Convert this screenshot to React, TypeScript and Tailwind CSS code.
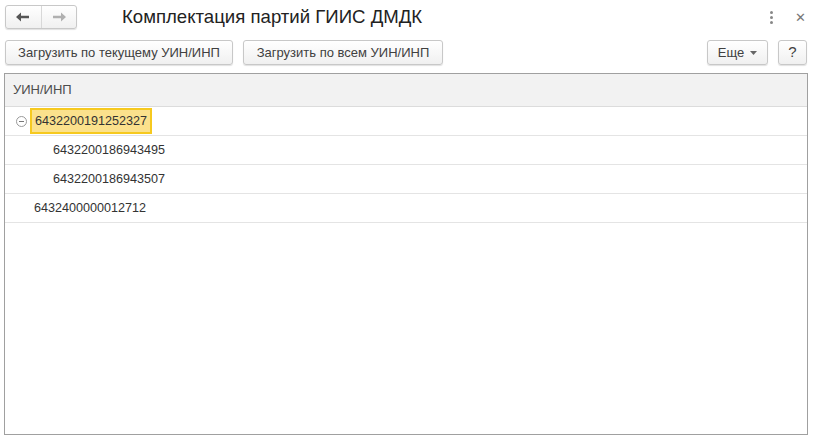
import React from 'react';

const btn =
  'h-[25px] flex items-center justify-center rounded-[3px] border border-[#c8c8c8] bg-gradient-to-b from-white to-[#f0f0f0] shadow-[0_1px_1px_rgba(0,0,0,0.12)] text-[13px] text-[#404040]';

function Arrow({ dir, color }: { dir: 'left' | 'right'; color: string }) {
  return (
    <svg width="14" height="10" viewBox="0 0 14 10">
      {dir === 'left' ? (
        <path d="M0 5 L5 0.5 L5 3.7 L13 3.7 L13 6.3 L5 6.3 L5 9.5 Z" fill={color} />
      ) : (
        <path d="M14 5 L9 0.5 L9 3.7 L1 3.7 L1 6.3 L9 6.3 L9 9.5 Z" fill={color} />
      )}
    </svg>
  );
}

const rows = [
  { id: '6432200191252327', level: 0, expanded: true, selected: true },
  { id: '6432200186943495', level: 1 },
  { id: '6432200186943507', level: 1 },
  { id: '6432400000012712', level: 0 },
];

export default function App() {
  return (
    <div className="w-[816px] h-[442px] bg-white overflow-hidden text-[#333] font-['Liberation_Sans',Arial,sans-serif]">
      {/* Title bar */}
      <div className="flex items-center h-[34px] pl-[5px] pr-[10px]">
        <div className="flex h-[24px] w-[72px] rounded-[3px] border border-[#c8c8c8] bg-gradient-to-b from-white to-[#f0f0f0] shadow-[0_1px_1px_rgba(0,0,0,0.12)]">
          <div className="flex-1 flex items-center justify-center border-r border-[#d8d8d8]">
            <Arrow dir="left" color="#555" />
          </div>
          <div className="flex-1 flex items-center justify-center">
            <Arrow dir="right" color="#b0b0b0" />
          </div>
        </div>
        <div className="ml-[45px] text-[18.6px] text-[#222] leading-none">Комплектация партий ГИИС ДМДК</div>
        <div className="ml-auto flex items-center gap-[22px]">
          <div className="flex flex-col gap-[2px]">
            <span className="w-[3px] h-[3px] rounded-full bg-[#888]" />
            <span className="w-[3px] h-[3px] rounded-full bg-[#888]" />
            <span className="w-[3px] h-[3px] rounded-full bg-[#888]" />
          </div>
          <span className="text-[13px] text-[#777] leading-none">✕</span>
        </div>
      </div>

      {/* Toolbar */}
      <div className="flex items-center mt-[6px] pl-[5px] pr-[9px] h-[25px]">
        <button className={`${btn} w-[228px]`}>Загрузить по текущему УИН/ИНП</button>
        <button className={`${btn} w-[200px] ml-[10px]`}>Загрузить по всем УИН/ИНП</button>
        <button className={`${btn} w-[61px] ml-auto gap-[6px]`}>
          <span>Еще</span>
          <svg width="7" height="4" viewBox="0 0 7 4">
            <path d="M0 0 L7 0 L3.5 4 Z" fill="#666" />
          </svg>
        </button>
        <button className={`${btn} w-[29px] ml-[10px] text-[15px]`}>?</button>
      </div>

      {/* Table */}
      <div className="mx-[4px] mt-[8px] h-[362px] w-[804px] border border-[#a0a0a0] flex flex-col">
        <div className="h-[33px] flex items-center pl-[8px] bg-[#f2f2f2] border-b border-[#dcdcdc] text-[13px] text-[#4d4d4d]">
          УИН/ИНП
        </div>
        {rows.map((r) => (
          <div key={r.id} className="h-[29px] flex items-center border-b border-[#e4e4e4] text-[12.6px] text-[#333]">
            {r.level === 0 && r.expanded ? (
              <>
                <span className="ml-[11px] w-[11px] h-[11px] rounded-full border border-[#9a9a9a] flex items-center justify-center">
                  <span className="w-[5px] h-[1px] bg-[#777]" />
                </span>
                <div
                  className={`ml-[3px] h-[26px] px-[3px] flex items-center ${
                    r.selected ? 'bg-[#fbe18c] border-2 border-[#f6c91f]' : ''
                  }`}
                >
                  {r.id}
                </div>
              </>
            ) : r.level === 1 ? (
              <span className="ml-[48px]">{r.id}</span>
            ) : (
              <span className="ml-[29px]">{r.id}</span>
            )}
          </div>
        ))}
      </div>
    </div>
  );
}
